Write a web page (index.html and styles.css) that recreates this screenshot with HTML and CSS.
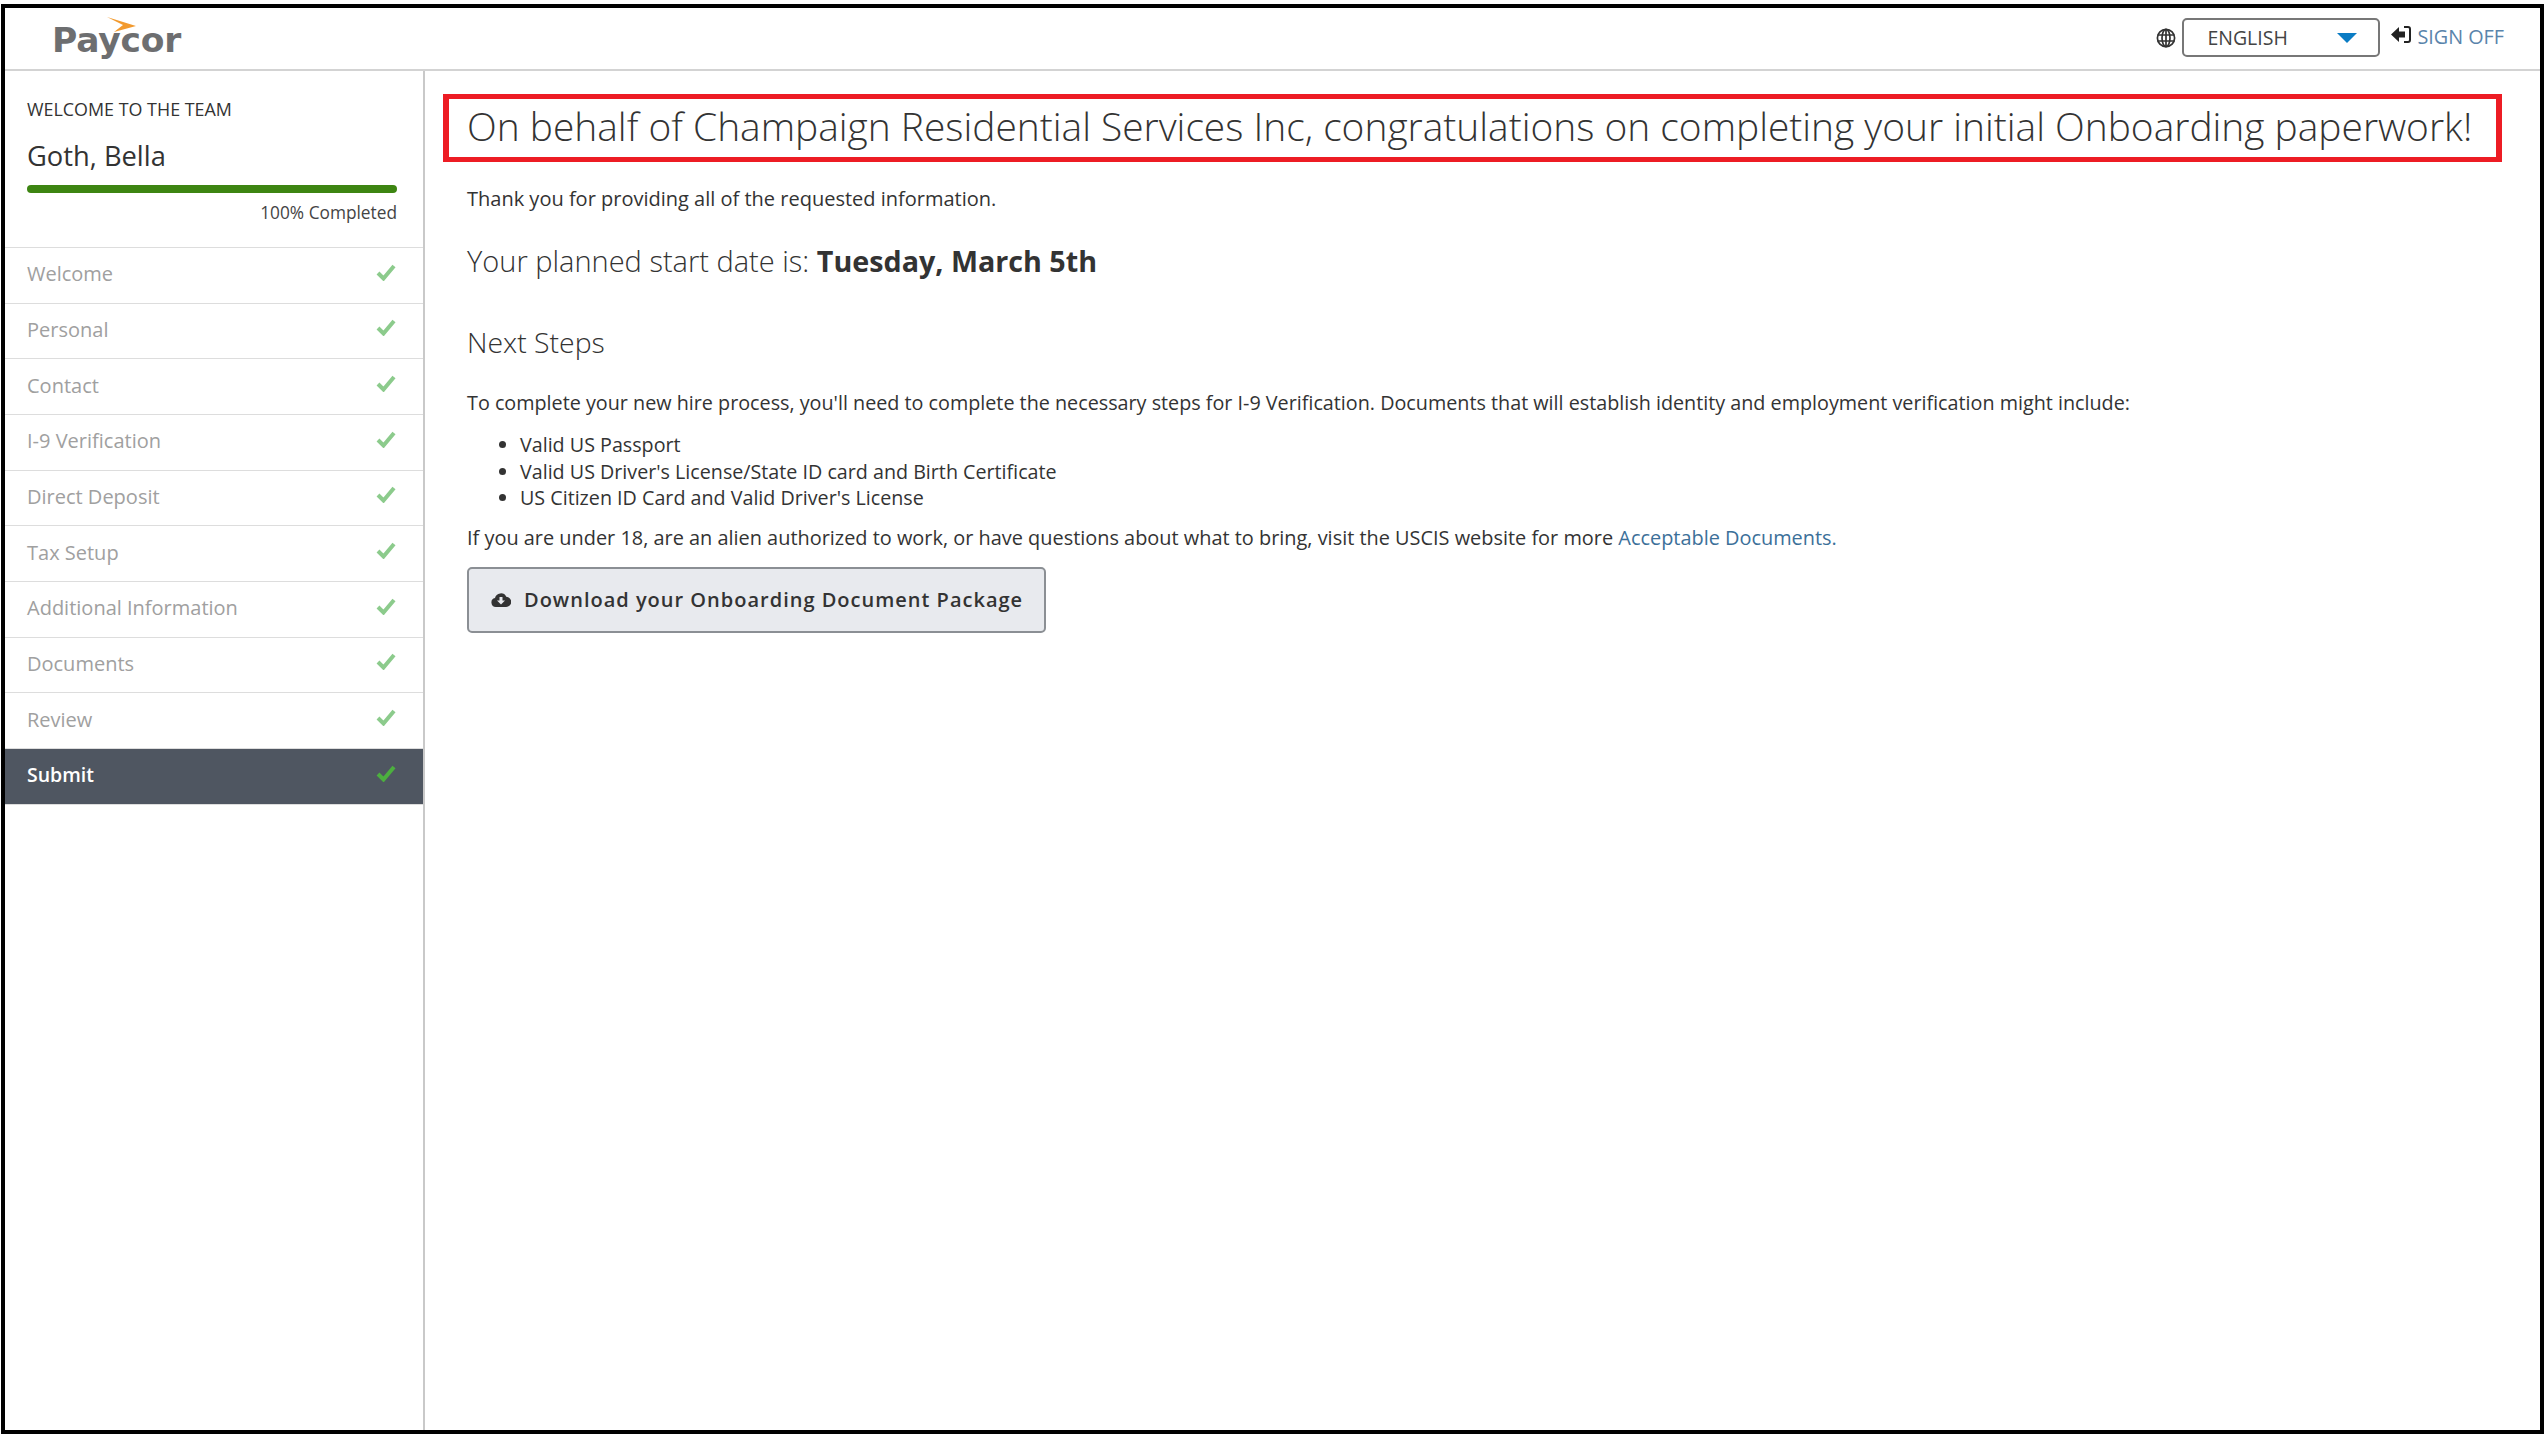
FILE: index.html
```html
<!DOCTYPE html>
<html lang="en">

<head>
    <meta charset="UTF-8">
    <title>Onboarding - Submit</title>
    <link rel="stylesheet" href="styles.css">
</head>

<body>
    <div class="frame">
        <header class="topbar">
            <div class="logo">
                <svg class="logo-arrow" viewBox="0 0 30 17"><path d="M0 0 L29 9 L7 15 L16 8 Z" fill="#f29a2e" /></svg>
                <span class="logo-text">Paycor</span>
            </div>
            <div class="topbar-right">
                <svg class="globe" viewBox="0 0 20 20" fill="none" stroke="#333" stroke-width="1.7">
                    <circle cx="10" cy="10" r="8.6" />
                    <ellipse cx="10" cy="10" rx="4" ry="8.6" />
                    <path d="M1.6 7 H18.4 M1.6 13 H18.4 M10 1.4 V18.6" />
                </svg>
                <div class="lang-select">
                    <span>ENGLISH</span>
                    <i class="caret"></i>
                </div>
                <a class="sign-off" href="#">
                    <svg viewBox="0 0 20 17"><path d="M0 8.5 L8 1 V5.5 H14 V11.5 H8 V16 Z" fill="#222" /><path d="M13 1 H17 Q19 1 19 3 V14 Q19 16 17 16 H13" fill="none" stroke="#222" stroke-width="2" /></svg>
                    <span>SIGN OFF</span>
                </a>
            </div>
        </header>

        <div class="layout">
            <aside class="sidebar">
                <div class="intro">
                    <div class="intro-label">WELCOME TO THE TEAM</div>
                    <div class="intro-name">Goth, Bella</div>
                    <div class="progress"></div>
                    <div class="progress-text">100% Completed</div>
                </div>
                <ul class="steps">
                    <li>Welcome<svg viewBox="0 0 20 17"><path d="M2 9 L7.5 14.5 L18 2" /></svg></li>
                    <li>Personal<svg viewBox="0 0 20 17"><path d="M2 9 L7.5 14.5 L18 2" /></svg></li>
                    <li>Contact<svg viewBox="0 0 20 17"><path d="M2 9 L7.5 14.5 L18 2" /></svg></li>
                    <li>I-9 Verification<svg viewBox="0 0 20 17"><path d="M2 9 L7.5 14.5 L18 2" /></svg></li>
                    <li>Direct Deposit<svg viewBox="0 0 20 17"><path d="M2 9 L7.5 14.5 L18 2" /></svg></li>
                    <li>Tax Setup<svg viewBox="0 0 20 17"><path d="M2 9 L7.5 14.5 L18 2" /></svg></li>
                    <li>Additional Information<svg viewBox="0 0 20 17"><path d="M2 9 L7.5 14.5 L18 2" /></svg></li>
                    <li>Documents<svg viewBox="0 0 20 17"><path d="M2 9 L7.5 14.5 L18 2" /></svg></li>
                    <li>Review<svg viewBox="0 0 20 17"><path d="M2 9 L7.5 14.5 L18 2" /></svg></li>
                    <li class="active">Submit<svg viewBox="0 0 20 17"><path d="M2 9 L7.5 14.5 L18 2" /></svg></li>
                </ul>
            </aside>

            <main class="content">
                <h1 class="congrats">On behalf of Champaign Residential Services Inc, congratulations on completing your initial Onboarding paperwork!</h1>
                <div class="details">
                    <p class="thanks">Thank you for providing all of the requested information.</p>
                    <h2 class="start-date">Your planned start date is: <strong>Tuesday, March 5th</strong></h2>
                    <h2 class="next-steps">Next Steps</h2>
                    <p class="complete">To complete your new hire process, you'll need to complete the necessary steps for I-9 Verification. Documents that will establish identity and employment verification might include:</p>
                    <ul class="doc-list">
                        <li>Valid US Passport</li>
                        <li>Valid US Driver's License/State ID card and Birth Certificate</li>
                        <li>US Citizen ID Card and Valid Driver's License</li>
                    </ul>
                    <p class="under-18">If you are under 18, are an alien authorized to work, or have questions about what to bring, visit the USCIS website for more <a href="#">Acceptable Documents.</a></p>
                    <button class="download">
                        <svg viewBox="0 0 20 16"><path fill-rule="evenodd" d="M5 15 a4.5 4.5 0 0 1 -1 -8.9 a6 6 0 0 1 11.3 -1.3 a5 5 0 0 1 -0.3 10.2 Z M8.5 5 V8.5 H6 L10 12.5 L14 8.5 H11.5 V5 Z" fill="#333" /></svg>
                        Download your Onboarding Document Package
                    </button>
                </div>
            </main>
        </div>
    </div>
</body>

</html>
```

FILE: styles.css
```css
* {
    box-sizing: border-box;
}

html,
body {
    height: 100%;
}

body {
    margin: 0;
    padding: 4px 0 0 1px;
    background-color: #fff;
    font-family: "Open Sans", sans-serif;
    font-size: 19.8px;
    color: #333;
    overflow: hidden;
}

.frame {
    display: flex;
    flex-direction: column;
    height: 1430px;
    border: 4px solid #000;
}

/* top bar */
.topbar {
    display: flex;
    justify-content: space-between;
    height: 63px;
    flex-shrink: 0;
    border-bottom: 2px solid #d3d3d3;
}

.logo {
    position: relative;
    padding: 9px 0 0 47px;
}

.logo-text {
    font-family: "DejaVu Sans", sans-serif;
    font-size: 34.5px;
    line-height: 46px;
    font-weight: bold;
    letter-spacing: -0.2px;
    color: #6d6e70;
}

.logo-arrow {
    position: absolute;
    left: 102px;
    top: 9px;
    width: 30px;
    height: 17px;
}

.topbar-right {
    display: flex;
    align-items: flex-start;
    padding: 10px 36px 0 0;
}

.globe {
    width: 20px;
    height: 20px;
    margin: 10px 6px 0 0;
}

.lang-select {
    display: flex;
    justify-content: space-between;
    align-items: center;
    width: 198px;
    height: 39px;
    padding: 0 21px 0 23px;
    border: 2px solid #777;
    border-radius: 5px;
    font-size: 19.5px;
    color: #444;
}

.caret {
    width: 0;
    height: 0;
    border-left: 10px solid transparent;
    border-right: 10px solid transparent;
    border-top: 10px solid #0a7cc4;
}

.sign-off {
    display: flex;
    align-items: center;
    height: 36px;
    margin-left: 11px;
    gap: 6px;
    font-size: 19.8px;
    color: #5a84ab;
    text-decoration: none;
}

.sign-off svg {
    width: 20px;
    height: 17px;
    margin-top: -4px;
}

.layout {
    display: flex;
    flex: 1;
    min-height: 0;
}

/* sidebar */
.sidebar {
    width: 420px;
    flex-shrink: 0;
    border-right: 2px solid #c9c9c9;
}

.intro {
    height: 176px;
    padding: 26px 26px 0 22px;
}

.intro-label {
    font-size: 17.9px;
    line-height: 24px;
    color: #333;
}

.intro-name {
    margin-top: 16px;
    font-size: 27.3px;
    line-height: 38px;
    color: #333;
}

.progress {
    height: 8px;
    margin-top: 10px;
    border-radius: 4px;
    background-color: #3d8512;
}

.progress-text {
    margin-top: 8px;
    text-align: right;
    font-size: 17.3px;
    line-height: 24px;
    color: #444;
}

.steps {
    margin: 0;
    padding: 0;
    list-style: none;
    border-bottom: 1px solid #ddd;
}

.steps li {
    display: flex;
    justify-content: space-between;
    align-items: center;
    height: 55.67px;
    padding: 0 27px 3px 22px;
    border-top: 1px solid #ddd;
    font-size: 20px;
    color: #a0a0a0;
}

.steps svg {
    width: 20px;
    height: 17px;
    margin-top: -3px;
    fill: none;
    stroke: #8ccb8c;
    stroke-width: 4;
}

.steps li.active {
    background-color: #4f5661;
    color: #fff;
    font-size: 19.5px;
    font-weight: 600;
}

.steps li.active svg {
    stroke: #4caf3f;
}

/* main content */
.content {
    flex: 1;
    padding: 23px 38px 0 18px;
}

.congrats {
    height: 68px;
    margin: 0;
    padding: 0 0 0 18px;
    border: solid #ed1c24;
    border-width: 5px 6px;
    font-size: 38.9px;
    line-height: 54px;
    font-weight: 300;
    color: #333;
    white-space: nowrap;
}

.details {
    padding-left: 24px;
}

.details p {
    margin: 0;
    line-height: 26px;
}

.details .thanks {
    padding-top: 24px;
    font-size: 20px;
}

.details h2 {
    margin: 0;
    font-size: 29px;
    line-height: 38px;
    font-weight: 300;
}

.details h2 strong {
    font-size: 28.7px;
    font-weight: 700;
}

.start-date {
    padding-top: 30px;
    box-sizing: content-box;
}

.details .next-steps {
    padding-top: 43px;
    box-sizing: content-box;
    font-size: 28.4px;
}

.details .complete {
    margin-top: 29px;
    font-size: 19.76px;
}

.doc-list {
    margin: 16px 0 0;
    padding-left: 53px;
    font-size: 19.7px;
    line-height: 26.6px;
}

.details .under-18 {
    margin-top: 13px;
    font-size: 19.92px;
}

.under-18 a {
    color: #3c7099;
    text-decoration: none;
}

.download {
    display: flex;
    align-items: center;
    gap: 13px;
    width: 579px;
    height: 66px;
    margin-top: 16px;
    padding: 0 0 0 22px;
    border: 2px solid #8b8f94;
    border-radius: 5px;
    background-color: #e8eaee;
    font-family: "Open Sans", sans-serif;
    font-size: 20px;
    font-weight: 600;
    letter-spacing: 1px;
    color: #333;
}

.download svg {
    width: 20px;
    height: 16px;
}
```
